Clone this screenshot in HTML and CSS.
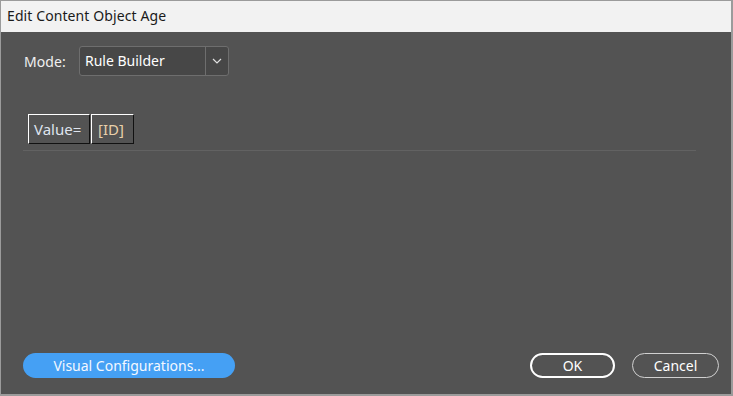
FILE: index.html
```html
<!DOCTYPE html>
<html>
<head>
<meta charset="utf-8">
<link rel="stylesheet" href="styles.css">
</head>
<body>
<div class="window">
  <div class="titlebar">Edit Content Object Age</div>
  <div class="content">
    <div class="mode-row">
      <span class="mode-label">Mode:</span>
      <div class="select">
        <span class="select-text">Rule Builder</span>
        <span class="select-arrow">
          <svg width="10" height="6" viewBox="0 0 10 6"><path d="M1 1 L5 5 L9 1" fill="none" stroke="#e0e0e0" stroke-width="1.2"/></svg>
        </span>
      </div>
    </div>
    <div class="rule-area">
      <div class="tokens">
        <span class="token token-text">Value=</span>
        <span class="token token-field">[ID]</span>
      </div>
      <div class="divider"></div>
    </div>
    <div class="footer">
      <button class="btn btn-blue">Visual Configurations...</button>
      <div class="footer-right">
        <button class="btn btn-ok">OK</button>
        <button class="btn btn-cancel">Cancel</button>
      </div>
    </div>
  </div>
</div>
</body>
</html>
```
FILE: styles.css
```css
html, body {
  margin: 0;
  padding: 0;
  background: #535353;
}
.window {
  box-sizing: border-box;
  width: 733px;
  height: 396px;
  border: 1px solid #9b9b9b;
  border-right-width: 2px;
  border-bottom-width: 2px;
  display: flex;
  flex-direction: column;
  font-family: "Noto Sans", "Open Sans", sans-serif;
  background: #535353;
}
.titlebar {
  height: 31px;
  background: #f2f2f2;
  color: #1a1a1a;
  font-size: 14px;
  line-height: 30px;
  padding-left: 6px;
  flex: none;
  letter-spacing: 0.1px;
}
.content {
  flex: 1;
  display: flex;
  flex-direction: column;
  padding: 14px 12px 16px 22px;
}
.mode-row {
  display: flex;
  align-items: center;
  gap: 13px;
  height: 30px;
  padding-left: 1px;
}
.mode-label {
  color: #f0f0f0;
  font-size: 14px;
  letter-spacing: 0.1px;
}
.select {
  box-sizing: border-box;
  width: 150px;
  height: 30px;
  border: 1px solid #6e6e6e;
  border-radius: 3px;
  background: #474747;
  display: flex;
  align-items: stretch;
}
.select-text {
  flex: 1;
  color: #ffffff;
  font-size: 14px;
  line-height: 28px;
  padding-left: 5px;
}
.select-arrow {
  width: 22px;
  border-left: 1px solid #6e6e6e;
  display: flex;
  align-items: center;
  justify-content: center;
}
.rule-area {
  margin-top: 38px;
  padding-left: 5px;
  margin-right: 23px;
}
.tokens {
  display: flex;
  gap: 1px;
}
.token {
  box-sizing: border-box;
  height: 30px;
  font-size: 15px;
  line-height: 28px;
  padding: 0 0 0 5px;
  border-top: 1px solid #ffffff;
  border-left: 1px solid #ffffff;
  border-right: 1px solid #111111;
  border-bottom: 1px solid #111111;
  white-space: nowrap;
}
.token-text {
  color: #dfe4ee;
  width: 62px;
}
.token-field {
  color: #e9d0aa;
  width: 43px;
  padding-left: 6px;
}
.divider {
  height: 1px;
  background: #626262;
  margin-top: 6px;
  margin-left: -5px;
}
.footer {
  margin-top: auto;
  display: flex;
  justify-content: space-between;
  align-items: center;
}
.footer-right {
  display: flex;
  gap: 17px;
}
.btn {
  box-sizing: border-box;
  height: 25px;
  border-radius: 13px;
  font-family: "Noto Sans", "Open Sans", sans-serif;
  font-size: 14px;
  color: #ffffff;
  padding: 0;
  line-height: 21px;
  background: transparent;
}
.btn-blue {
  width: 212px;
  background: #45a0f4;
  border: none;
  line-height: 25px;
  color: #f4f8ff;
}
.btn-ok {
  width: 85px;
  border: 2px solid #ffffff;
}
.btn-cancel {
  width: 87px;
  border: 1px solid #d0d0d0;
  line-height: 23px;
}
```
